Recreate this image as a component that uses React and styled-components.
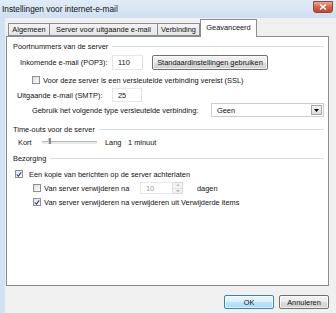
import React from 'react'
import styled, { createGlobalStyle } from 'styled-components'

const Global = createGlobalStyle`
  html, body { margin: 0; padding: 0; background: #f0f0f0; }
  body { font-family: "Liberation Sans", Arial, sans-serif; font-size: 7.4px; color: #111; }
`

const Window = styled.div`
  width: 336px;
  height: 313px;
  display: flex;
  flex-direction: column;
  background: #d3e2f3;
  overflow: hidden;
`

const TitleBar = styled.div`
  height: 18px;
  display: flex;
  align-items: center;
  justify-content: space-between;
  padding: 0 3px 0 2px;
  background: linear-gradient(#e2ecf8, #cfdff1);
  font-size: 8.3px;
  flex: none;
`

const CloseButton = styled.div`
  width: 18px;
  height: 10px;
  margin-bottom: 4px;
  border: 1px solid #8a4a40;
  border-radius: 0 0 3px 3px;
  background: linear-gradient(#e9a899, #d7634b 50%, #c2452e);
  display: flex;
  align-items: center;
  justify-content: center;
`

const Client = styled.div`
  flex: 1;
  display: flex;
  flex-direction: column;
  margin-left: 5px;
  background: #f0f0f0;
  padding: 1px 7px 0 1px;
`

const TabStrip = styled.div`
  display: flex;
  align-items: flex-end;
  height: 17px;
  padding-left: 2px;
`

const Tab = styled.div`
  width: ${p => p.$w}px;
  height: ${p => (p.$active ? 18 : 13)}px;
  box-sizing: border-box;
  display: flex;
  justify-content: center;
  align-items: ${p => (p.$active ? 'flex-start' : 'center')};
  padding-top: ${p => (p.$active ? 3 : 0)}px;
  margin: ${p => (p.$active ? '0 0 -1px 0' : '0')};
  border: 1px solid #898c95;
  border-bottom: ${p => (p.$active ? 'none' : '1px solid #898c95')};
  border-left: ${p => (p.$first || p.$active ? '1px solid #898c95' : 'none')};
  background: ${p => (p.$active ? '#fff' : 'linear-gradient(#f3f3f3, #e5e5e5)')};
  position: relative;
  z-index: ${p => (p.$active ? 1 : 0)};
  white-space: nowrap;
`

const Panel = styled.div`
  height: 250px;
  box-sizing: border-box;
  border: 1px solid #898c95;
  background: #fff;
  padding: 0 4px 0 0;
`

const Row = styled.div`
  display: flex;
  align-items: center;
  height: ${p => p.$h || 10}px;
  margin-top: ${p => p.$mt || 0}px;
  padding-left: ${p => p.$indent || 0}px;
  white-space: nowrap;
`

const GroupHeader = styled(Row)`
  padding-left: 6px;
  &::after {
    content: '';
    flex: 1;
    margin-left: 4px;
    border-top: 1px solid #d5dfe5;
  }
`

const Label = styled.span`
  display: inline-block;
  flex: none;
  width: ${p => (p.$w ? `${p.$w}px` : 'auto')};
  color: ${p => (p.$disabled ? '#8d8d8d' : '#111')};
`

const TextBox = styled.div`
  width: ${p => p.$w}px;
  height: 100%;
  box-sizing: border-box;
  border: 1px solid #abadb3;
  border-top-color: #e3e9ef;
  border-left-color: #e2e3ea;
  border-right-color: #dbdfe6;
  border-bottom-color: #e3e9ef;
  display: flex;
  align-items: center;
  padding-left: 5px;
  color: ${p => (p.$disabled ? '#9a9a9a' : '#111')};
  background: #fff;
  flex: none;
`

const PushButton = styled.div`
  width: ${p => p.$w}px;
  height: ${p => p.$h || 15}px;
  box-sizing: border-box;
  border: 1px solid ${p => (p.$default ? '#3c7fb1' : '#707070')};
  border-radius: 2px;
  background: ${p =>
    p.$default
      ? 'linear-gradient(#eaf6fd, #d9f0fc 50%, #bee6fd 50%, #a7d9f5)'
      : 'linear-gradient(#f2f2f2, #ebebeb 50%, #dddddd 50%, #cfcfcf)'};
  box-shadow: inset 0 0 0 1px rgba(255, 255, 255, 0.7);
  display: flex;
  align-items: center;
  justify-content: center;
  margin-left: ${p => p.$ml || 0}px;
  flex: none;
`

const Select = styled.div`
  width: 114px;
  height: 14px;
  box-sizing: border-box;
  border: 1px solid #c9cdd3;
  display: flex;
  align-items: center;
  padding: 0 1px 0 5px;
  background: #fff;
`

const SelectArrow = styled.div`
  margin-left: auto;
  width: 11px;
  height: 10px;
  box-sizing: border-box;
  border: 1px solid #a5a5a5;
  background: linear-gradient(#f4f4f4, #dcdcdc);
  display: flex;
  align-items: center;
  justify-content: center;
`

const Check = styled.div`
  width: 8px;
  height: 8px;
  box-sizing: border-box;
  border: 1px solid #8f8f8f;
  background: linear-gradient(135deg, #e0e0e0, #fdfdfd);
  display: flex;
  align-items: center;
  justify-content: center;
  margin-right: ${p => p.$gap || 3}px;
  flex: none;
`

const Track = styled.div`
  width: 55px;
  height: 2px;
  margin: 0 8px 0 8px;
  background: #e7eaea;
  border-top: 1px solid #b8b8b8;
  position: relative;
  flex: none;
`

const Thumb = styled.div`
  position: absolute;
  left: 6px;
  top: -4px;
  width: 2px;
  height: 6px;
  background: #8a8a8a;
  border-left: 1px solid #d0d0d0;
`

const Spin = styled.div`
  display: flex;
  height: 100%;
  margin-left: 5px;
  margin-right: 14px;
`

const SpinButtons = styled.div`
  width: 10px;
  display: flex;
  flex-direction: column;
  border: 1px solid #d9d9d9;
  border-left: none;
  box-sizing: border-box;
`

const SpinPart = styled.div`
  flex: 1;
  display: flex;
  align-items: center;
  justify-content: center;
  background: #f4f4f4;
  border-top: ${p => (p.$down ? '1px solid #e2e2e2' : 'none')};
`

const Footer = styled.div`
  display: flex;
  justify-content: flex-end;
  padding-top: 9px;
`

function Tick() {
  return (
    <svg width="7" height="7" viewBox="0 0 7 7">
      <path d="M1,3.5 L2.8,5.5 L6,1" fill="none" stroke="#21398c" strokeWidth="1.3" />
    </svg>
  )
}

function CheckBox({ checked, gap }) {
  return <Check $gap={gap}>{checked && <Tick />}</Check>
}

function Tri({ up, color = '#000', size = 5 }) {
  return (
    <svg width={size} height={size * 0.6} viewBox="0 0 5 3">
      <path d={up ? 'M0,3 L2.5,0 L5,3 Z' : 'M0,0 L5,0 L2.5,3 Z'} fill={color} />
    </svg>
  )
}

export default function App() {
  return (
    <>
      <Global />
      <Window>
        <TitleBar>
          <span>Instellingen voor internet-e-mail</span>
          <CloseButton>
            <svg width="8" height="6" viewBox="0 0 8 6">
              <path d="M1,0.5 L7,5.5 M7,0.5 L1,5.5" stroke="#fff" strokeWidth="1.5" />
            </svg>
          </CloseButton>
        </TitleBar>
        <Client>
          <TabStrip>
            <Tab $first $w={42}>Algemeen</Tab>
            <Tab $w={108}>Server voor uitgaande e-mail</Tab>
            <Tab $w={42}>Verbinding</Tab>
            <Tab $active $w={57}>Geavanceerd</Tab>
          </TabStrip>
          <Panel>
            <GroupHeader $mt={4}>Poortnummers van de server</GroupHeader>
            <Row $h={15} $mt={4} $indent={13}>
              <Label $w={92}>Inkomende e-mail (POP3):</Label>
              <TextBox $w={31}>110</TextBox>
              <PushButton $w={116} $ml={9}>Standaardinstellingen gebruiken</PushButton>
            </Row>
            <Row $mt={5} $indent={25}>
              <CheckBox />
              <Label>Voor deze server is een versleutelde verbinding vereist (SSL)</Label>
            </Row>
            <Row $h={14} $mt={3} $indent={10}>
              <Label $w={95}>Uitgaande e-mail (SMTP):</Label>
              <TextBox $w={30}>25</TextBox>
            </Row>
            <Row $h={14} $mt={1} $indent={25}>
              <Label $w={179}>Gebruik het volgende type versleutelde verbinding:</Label>
              <Select>
                Geen
                <SelectArrow>
                  <Tri />
                </SelectArrow>
              </Select>
            </Row>
            <GroupHeader $mt={7}>Time-outs voor de server</GroupHeader>
            <Row $mt={3} $indent={11}>
              <Label $w={16}>Kort</Label>
              <Track>
                <Thumb />
              </Track>
              <Label $w={23}>Lang</Label>
              <Label>1 minuut</Label>
            </Row>
            <GroupHeader $mt={6}>Bezorging</GroupHeader>
            <Row $mt={6} $indent={8}>
              <CheckBox checked gap={6} />
              <Label>Een kopie van berichten op de server achterlaten</Label>
            </Row>
            <Row $h={12} $mt={3} $indent={26}>
              <CheckBox />
              <Label $w={91}>Van server verwijderen na</Label>
              <Spin>
                <TextBox $w={33} $disabled>10</TextBox>
                <SpinButtons>
                  <SpinPart><Tri up color="#b5b5b5" size={4} /></SpinPart>
                  <SpinPart $down><Tri color="#b5b5b5" size={4} /></SpinPart>
                </SpinButtons>
              </Spin>
              <Label>dagen</Label>
            </Row>
            <Row $mt={3} $indent={26}>
              <CheckBox checked />
              <Label>Van server verwijderen na verwijderen uit Verwijderde items</Label>
            </Row>
          </Panel>
          <Footer>
            <PushButton $w={50} $h={14} $default>OK</PushButton>
            <PushButton $w={50} $h={14} $ml={5}>Annuleren</PushButton>
          </Footer>
        </Client>
      </Window>
    </>
  )
}
